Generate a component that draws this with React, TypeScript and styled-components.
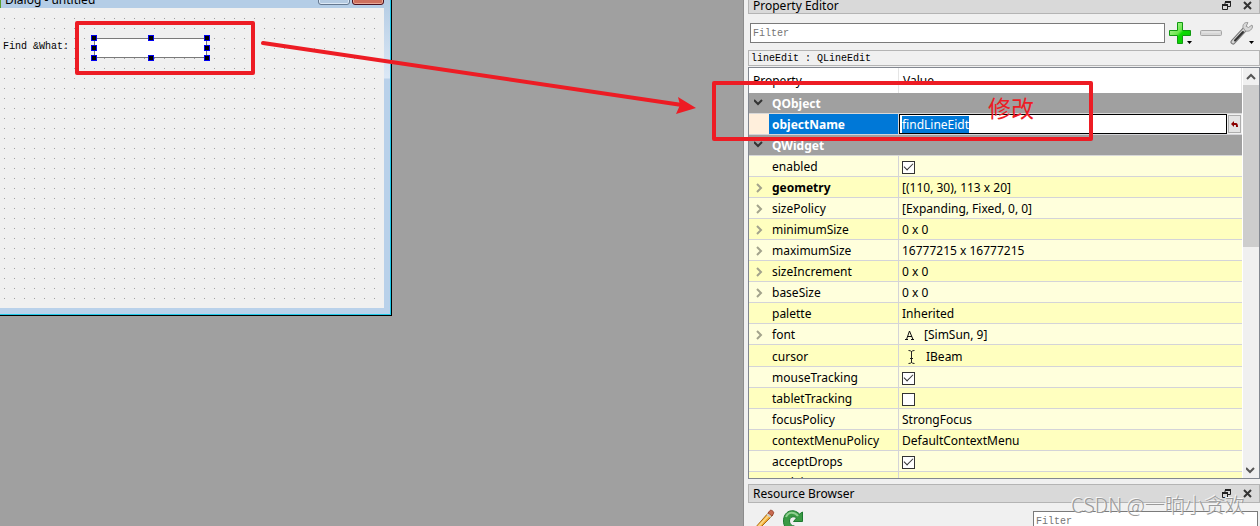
import React, { useEffect, useRef } from 'react';
import styled, { createGlobalStyle } from 'styled-components';

const ui = `"Noto Sans", "Noto Sans CJK SC", sans-serif`;
const mono = `"Liberation Mono", monospace`;
const red = '#ed1c24';

const GlobalStyle = createGlobalStyle`
  *, *::before, *::after { box-sizing: border-box; }
  body { margin: 0; background: #a0a0a0; font: 12px/16px ${ui}; color: #000; overflow: hidden; }
  button, input { font: inherit; color: inherit; margin: 0; padding: 0; }
  button { border: 0; background: none; display: block; }
  svg { display: block; }
`;

const Root = styled.main`
  display: flex;
  height: 100vh;
  position: relative;
`;

const Workspace = styled.section`
  flex: 1;
  min-width: 0;
  display: flex;
  align-items: flex-start;
  background: #a0a0a0;
`;

/* Dialog being designed */

const DialogWindow = styled.div`
  flex: 0 0 392px;
  height: 316px;
  display: flex;
  flex-direction: column;
  border: solid #000;
  border-width: 0 1px 1px 0;
`;

const DialogFrame = styled.div`
  flex: 1;
  display: flex;
  flex-direction: column;
  padding: 0 6px 6px 0;
  border: solid #1fc8e8;
  border-width: 0 1px 1px 0;
  background: linear-gradient(#b4cce4 0, #dbe8f6 78px, #b9d1ea 79px);
`;

const DialogTitleBar = styled.header`
  height: 8px;
  display: flex;
  align-items: flex-end;
  overflow: hidden;
  background: #b4cde6;
  border-left: 1px solid #5aa02c;
`;

const DialogTitle = styled.h1`
  flex: 1;
  margin: 0;
  padding-left: 4px;
  font-size: 12px;
  line-height: 16px;
  font-weight: 400;
`;

const CaptionButtons = styled.div`
  display: flex;
  gap: 2px;
  padding-bottom: 3px;
`;

const CaptionButton = styled.button<{ $close?: boolean }>`
  width: 32px;
  height: 14px;
  border: 1px solid ${p => (p.$close ? '#4a1020' : '#66788f')};
  border-radius: 0 0 3px 3px;
  background: ${p => (p.$close ? '#ce6f5c' : '#b5cbe2')};
  box-shadow: inset 0 0 0 1px ${p => (p.$close ? '#e8a898' : '#dce9f6')};
`;

const FormCanvas = styled.div`
  flex: 1;
  position: relative;
  background-color: #f0f0f0;
  background-image: linear-gradient(90deg, transparent 1px, #f0f0f0 1px),
    linear-gradient(#a0a0a0 1px, transparent 1px);
  background-size: 10px 10px;
  background-position: 4px 0;
  box-shadow: inset 0 1px #f0f0f0;
`;

const FormLabel = styled.label`
  position: absolute;
  left: 3px;
  top: 32px;
  font: 10px/14px ${mono};
`;

const SelectedWidget = styled.div`
  position: absolute;
  left: 94px;
  top: 30px;
  width: 113px;
  height: 20px;
`;

const FormLineEdit = styled.input`
  display: block;
  width: 100%;
  height: 100%;
  border: 1px solid #7a7a7a;
  background: #fff;
  outline: 0;
`;

const Handle = styled.i<{ $x: number; $y: number }>`
  position: absolute;
  left: ${p => p.$x}%;
  top: ${p => p.$y}%;
  width: 6px;
  height: 6px;
  margin: -3px;
  background: #000;
  border: 1px solid #0000f0;
`;

/* Docks */

const Dock = styled.aside`
  flex: 0 0 517px;
  position: relative;
  display: flex;
  flex-direction: column;
  padding-left: 4px;
  border-left: 1px solid #8c8c8c;
  background: #f0f0f0;
`;

const DockTitle = styled.header<{ $clipped?: boolean }>`
  flex: none;
  height: ${p => (p.$clipped ? 14 : 19)}px;
  display: flex;
  align-items: center;
  gap: 12px;
  padding: ${p => (p.$clipped ? '0 7px 2px 4px' : '0 7px 0 4px')};
  background: #d9d9d9;
  border: 1px solid #b4b4b4;
  border-top-width: ${p => (p.$clipped ? 0 : 1)}px;
`;

const DockHeading = styled.h2`
  flex: 1;
  margin: 0;
  font-size: 12px;
  line-height: 14px;
  font-weight: 400;
`;

const Toolbar = styled.div`
  flex: none;
  display: flex;
  align-items: center;
  padding: 7px 2px 5px 2px;
`;

const FilterInput = styled.input`
  flex: 1;
  min-width: 0;
  height: 20px;
  margin-right: 3px;
  padding: 0 2px;
  border: 1px solid #7a7a7a;
  background: #fff;
  font: 10px/16px ${mono};
  outline: 0;
  &::placeholder { color: #757575; opacity: 1; }
`;

const ToolButton = styled.button`
  width: 30px;
  height: 24px;
`;

const ObjectInfo = styled.div`
  flex: none;
  height: 16px;
  padding: 1px 0 0 2px;
  border: 1px solid #b4b4b4;
  font: 10px/14px ${mono};
`;

const TreeView = styled.div`
  flex: 1;
  min-height: 0;
  display: flex;
  margin-top: 1px;
  border: 1px solid #828790;
  background: #fff;
`;

const TreeClip = styled.div`
  flex: 1;
  min-width: 0;
  overflow: hidden;
`;

const Table = styled.table`
  width: 100%;
  table-layout: fixed;
  border-collapse: separate;
  border-spacing: 0;
`;

const HeadCell = styled.th<{ $name?: boolean }>`
  width: ${p => (p.$name ? '150px' : 'auto')};
  height: 25px;
  padding: 0 0 0 4px;
  border-right: 1px solid #e5e5e5;
  text-align: left;
  font-weight: 400;
`;

const GroupCell = styled.th`
  height: 21px;
  padding: 0;
  background: #a0a0a0;
  border-bottom: 1px solid #d8d8d8;
  color: #fff;
  text-align: left;
`;

const Row = styled.tr<{ $dark?: boolean; $tall?: boolean }>`
  height: ${p => (p.$tall ? 22 : 21)}px;
  background: ${p => (p.$dark ? '#ffffbf' : '#ffffdc')};
`;

const NameCell = styled.th<{ $bold?: boolean }>`
  padding: 0;
  border: solid #d4d4d8;
  border-width: 0 1px 1px 0;
  text-align: left;
  font-weight: ${p => (p.$bold ? 700 : 400)};
`;

const ValueCell = styled.td`
  padding: 2px 0 0 3px;
  border-bottom: 1px solid #d4d4d8;
  white-space: nowrap;
`;

const EditorCell = styled.td`
  padding: 0;
  border-bottom: 1px solid #d4d4d8;
  background: #f0f0f0;
`;

const NameLine = styled.div`
  display: flex;
  align-items: center;
  padding-top: 2px;
`;

const Branch = styled.span<{ $raised?: boolean }>`
  flex: 0 0 23px;
  padding: 0 0 ${p => (p.$raised ? 4 : 0)}px 5px;
`;

const ActiveName = styled.div`
  margin-left: 20px;
  padding: 2px 0 0 3px;
  background: #0078d7;
  color: #fff;
  line-height: 18px;
`;

const ActiveRow = styled.tr`
  height: 21px;
  background: #ffefdc;
`;

const EditorLine = styled.div`
  display: flex;
  align-items: center;
  gap: 1px;
  padding-right: 1px;
`;

const ValueEditor = styled.input`
  flex: 1;
  min-width: 0;
  height: 20px;
  padding: 1px 2px 0;
  border: 1px solid #000;
  background: #fff;
  outline: 0;
  &::selection { background: #0078d7; color: #fff; }
`;

const ResetButton = styled.button`
  width: 13px;
  height: 18px;
  border: 1px solid #adadad;
  background: #e4e4e4;
`;

const Check = styled.input`
  appearance: none;
  display: grid;
  place-items: center;
  width: 13px;
  height: 13px;
  border: 1px solid #333;
  background: #fff;
  &:checked::after {
    content: '';
    width: 9px;
    height: 5px;
    margin-top: -3px;
    border: solid #333;
    border-width: 0 0 1px 1px;
    transform: rotate(-45deg);
  }
`;

const IconValue = styled.div`
  display: flex;
  align-items: center;
  gap: 8px;
`;

const ScrollBar = styled.div`
  flex: 0 0 16px;
  margin-left: 1px;
  display: flex;
  flex-direction: column;
  background: #f0f0f0;
`;

const ScrollButton = styled.button`
  height: 17px;
  display: grid;
  place-items: center;
`;

const ScrollTrack = styled.div`
  flex: 1;
`;

const ScrollThumb = styled.div`
  height: 43%;
  background: #cdcdcd;
`;

const ResourcePanel = styled.section`
  flex: 0 0 42px;
  margin-top: 5px;
  overflow: hidden;
`;

const ResourceTools = styled.div`
  display: flex;
  align-items: flex-start;
  gap: 6px;
  padding: 6px 2px 0 6px;
`;

const ResourceFilter = styled.div`
  flex: 0 0 225px;
  display: flex;
  margin-left: auto;
  padding-top: 2px;
`;

const ResourceInput = styled(FilterInput)`
  margin: 0;
`;

/* Annotations drawn over the windows */

const Frame = styled.div<{ $dock?: boolean }>`
  position: absolute;
  z-index: 2;
  border: 4px solid ${red};
  border-radius: 2px;
  pointer-events: none;
  ${p =>
    p.$dock
      ? 'right: 167px; top: 81px; width: 381px; height: 60px;'
      : 'left: 75px; top: 21px; width: 180px; height: 54px;'}
`;

const Arrow = styled.svg`
  position: absolute;
  z-index: 2;
  left: 0;
  top: 0;
  pointer-events: none;
`;

const Note = styled.span`
  position: absolute;
  z-index: 2;
  right: 226px;
  top: 95px;
  color: ${red};
  font: 400 23px/24px "Noto Sans CJK SC", sans-serif;
`;

const Watermark = styled.span`
  position: absolute;
  z-index: 3;
  right: 15px;
  bottom: 9px;
  color: #999;
  font: 300 20px/24px "Noto Sans CJK SC", sans-serif;
  text-shadow: -1px -1px #f6f6f6;
`;

const Chevron = ({ dir, color }: { dir: 'right' | 'down' | 'up'; color: string }) => {
  const d = { right: 'M3 1l4 4-4 4', down: 'M0 3l4 4 4-4', up: 'M1 7l4-4 4 4' }[dir];
  return (
    <svg width="10" height="10" viewBox="0 0 10 10" fill="none" stroke={color} strokeWidth="2">
      <path d={d} />
    </svg>
  );
};

const DockButtons = () => (
  <>
    <button aria-label="Float">
      <svg width="9" height="9" viewBox="0 0 9 9" fill="none" stroke="#222">
        <path d="M3 3V1.500h5.500v4H6" />
        <path d="M3 1h6" strokeWidth="2" />
        <path d="M.5 4.500h5v4h-5z" />
        <path d="M0 4h6" strokeWidth="2" />
      </svg>
    </button>
    <button aria-label="Close">
      <svg width="9" height="9" viewBox="0 0 9 9" stroke="#333" strokeWidth="2">
        <path d="M1 1l7 7M8 1L1 8" />
      </svg>
    </button>
  </>
);

const PlusIcon = () => (
  <svg width="30" height="24" viewBox="0 0 30 24">
    <defs>
      <linearGradient id="plus" x1="0" y1="0" x2="1" y2="1">
        <stop offset="0" stopColor="#c8f8b4" />
        <stop offset=".45" stopColor="#6be84c" />
        <stop offset=".55" stopColor="#0bdc00" />
        <stop offset="1" stopColor="#12c00a" />
      </linearGradient>
    </defs>
    <path d="M9.500 1.500h5v8h8v5h-8v8h-5v-8h-8v-5h8z" fill="url(#plus)" stroke="#109a10" strokeLinejoin="round" />
    <path d="M19 20h5l-2.500 3z" />
  </svg>
);

const MinusIcon = () => (
  <svg width="30" height="24" viewBox="0 0 30 24">
    <rect x="2.500" y="9.500" width="21" height="5" rx="1" fill="#d6d6d6" stroke="#a6a6a6" />
    <path d="M4 11h18" stroke="#ececec" />
  </svg>
);

const WrenchIcon = () => (
  <svg width="30" height="24" viewBox="0 0 30 24" fill="none" strokeLinecap="round">
    <path d="M5 21L17 8" stroke="#777" strokeWidth="5" />
    <path d="M5 21L17 8" stroke="#d4d4d4" strokeWidth="3" />
    <path d="M7 19.500L15 11" stroke="#333" strokeWidth="2" />
    <path d="M19.500 1.500c-3-.5-5 2-4.500 5l2.500 3.500c3 .8 6-.5 7-4l-.5-2-3.500 2.500-2-1z" fill="#d8d8d8" stroke="#999" />
    <path d="M21 20h5l-2.500 3z" fill="#000" />
  </svg>
);

const PencilIcon = () => (
  <svg width="22" height="22" viewBox="0 0 22 22">
    <path d="M1 19L15 3l4 3L4 21z" fill="#f0a830" stroke="#a86a18" />
    <path d="M3 19L16 5" stroke="#fbd680" strokeWidth="2" />
    <path d="M14 4l2-2.500c1-1 4.500 1 3.500 3L18 7z" fill="#c86a50" stroke="#99452f" />
    <path d="M13 5l4 3" stroke="#ccc" strokeWidth="2" />
  </svg>
);

const ReloadIcon = () => (
  <svg width="22" height="22" viewBox="0 0 22 22">
    <path
      d="M20.500 3v9.500h-9l3-3.500c-3-2.500-7-1-7 3 0 3 2 5 5 5l-2 4C4 21 1.500 17 1.500 12 1.500 2 11-1.500 17.500 5z"
      fill="#3a9a44"
      stroke="#1d7a30"
    />
    <path d="M4 8c2-5 8-6 12-1" fill="none" stroke="#90cf90" strokeWidth="2" />
  </svg>
);

const ResetIcon = () => (
  <svg width="11" height="12" viewBox="0 0 11 12" fill="none" stroke="#8b0000" strokeWidth="2">
    <path d="M3 6h4q1 0 1 3" />
    <path d="M5 3v6L2 6z" fill="#8b0000" stroke="none" />
  </svg>
);

const FontIcon = () => (
  <svg width="14" height="14" viewBox="0 0 14 14" fill="none" stroke="#111">
    <path d="M4.500 11.500L7.500 3l3.500 8.500M5.500 8.500h4.500M3 11.500h3M9 11.500h3" />
  </svg>
);

const IBeamIcon = () => (
  <svg width="16" height="16" viewBox="0 0 16 16" fill="none" stroke="#222">
    <path d="M6.500 1.500q2 0 3 1 1-1 3-1M9.500 2v12M6.500 14.500q2 0 3-1 1 1 3 1M8 9.500h3" />
  </svg>
);

type Property = {
  name: string;
  text?: string;
  checked?: boolean;
  expandable?: boolean;
  bold?: boolean;
  icon?: React.ReactNode;
};

const properties: Property[] = [
  { name: 'enabled', checked: true },
  { name: 'geometry', text: '[(110, 30), 113 x 20]', expandable: true, bold: true },
  { name: 'sizePolicy', text: '[Expanding, Fixed, 0, 0]', expandable: true },
  { name: 'minimumSize', text: '0 x 0', expandable: true },
  { name: 'maximumSize', text: '16777215 x 16777215', expandable: true },
  { name: 'sizeIncrement', text: '0 x 0', expandable: true },
  { name: 'baseSize', text: '0 x 0', expandable: true },
  { name: 'palette', text: 'Inherited' },
  { name: 'font', text: '[SimSun, 9]', expandable: true, icon: <FontIcon /> },
  { name: 'cursor', text: 'IBeam', icon: <IBeamIcon /> },
  { name: 'mouseTracking', checked: true },
  { name: 'tabletTracking', checked: false },
  { name: 'focusPolicy', text: 'StrongFocus' },
  { name: 'contextMenuPolicy', text: 'DefaultContextMenu' },
  { name: 'acceptDrops', checked: true },
  { name: 'toolTip', text: '' },
];

const handles = [
  [0, 0], [50, 0], [100, 0],
  [0, 50], [100, 50],
  [0, 100], [50, 100], [100, 100],
];

const Group = ({ name }: { name: string }) => (
  <tr>
    <GroupCell colSpan={2} scope="colgroup">
      <NameLine>
        <Branch $raised><Chevron dir="down" color="#333" /></Branch>
        {name}
      </NameLine>
    </GroupCell>
  </tr>
);

const PropertyRow = ({ item, dark }: { item: Property; dark: boolean }) => (
  <Row $dark={dark} $tall={item.name === 'cursor'}>
    <NameCell scope="row" $bold={item.bold}>
      <NameLine>
        <Branch>{item.expandable && <Chevron dir="right" color="#a3a38c" />}</Branch>
        {item.checked === undefined ? item.name : <label htmlFor={item.name}>{item.name}</label>}
      </NameLine>
    </NameCell>
    <ValueCell>
      {item.checked !== undefined ? (
        <Check type="checkbox" id={item.name} defaultChecked={item.checked} />
      ) : item.icon ? (
        <IconValue>{item.icon}{item.text}</IconValue>
      ) : (
        item.text
      )}
    </ValueCell>
  </Row>
);

export default function App() {
  const editor = useRef<HTMLInputElement>(null);

  useEffect(() => {
    editor.current?.focus();
    editor.current?.select();
  }, []);

  return (
    <Root>
      <GlobalStyle />
      <Workspace>
        <DialogWindow>
          <DialogFrame>
            <DialogTitleBar>
              <DialogTitle>Dialog - untitled</DialogTitle>
              <CaptionButtons>
                <CaptionButton aria-label="Minimize" />
                <CaptionButton aria-label="Close" $close />
              </CaptionButtons>
            </DialogTitleBar>
            <FormCanvas>
              <FormLabel htmlFor="lineEdit">Find &amp;What:</FormLabel>
              <SelectedWidget>
                <FormLineEdit id="lineEdit" />
                {handles.map(([x, y]) => <Handle key={`${x}-${y}`} $x={x} $y={y} />)}
              </SelectedWidget>
            </FormCanvas>
          </DialogFrame>
        </DialogWindow>
      </Workspace>

      <Dock>
        <DockTitle $clipped>
          <DockHeading>Property Editor</DockHeading>
          <DockButtons />
        </DockTitle>
        <Toolbar>
          <FilterInput placeholder="Filter" aria-label="Filter properties" />
          <ToolButton aria-label="Add property"><PlusIcon /></ToolButton>
          <ToolButton aria-label="Remove property"><MinusIcon /></ToolButton>
          <ToolButton aria-label="Configure"><WrenchIcon /></ToolButton>
        </Toolbar>
        <ObjectInfo>lineEdit : QLineEdit</ObjectInfo>
        <TreeView>
          <TreeClip>
            <Table>
              <thead>
                <tr>
                  <HeadCell $name scope="col">Property</HeadCell>
                  <HeadCell scope="col">Value</HeadCell>
                </tr>
              </thead>
              <tbody>
                <Group name="QObject" />
                <ActiveRow>
                  <NameCell scope="row" $bold>
                    <ActiveName><label htmlFor="objectName">objectName</label></ActiveName>
                  </NameCell>
                  <EditorCell>
                    <EditorLine>
                      <ValueEditor id="objectName" ref={editor} defaultValue="findLineEidt" />
                      <ResetButton aria-label="Reset"><ResetIcon /></ResetButton>
                    </EditorLine>
                  </EditorCell>
                </ActiveRow>
                <Group name="QWidget" />
                {properties.map((item, i) => (
                  <PropertyRow key={item.name} item={item} dark={i % 2 === 1} />
                ))}
              </tbody>
            </Table>
          </TreeClip>
          <ScrollBar>
            <ScrollButton aria-label="Scroll up"><Chevron dir="up" color="#555" /></ScrollButton>
            <ScrollTrack><ScrollThumb /></ScrollTrack>
            <ScrollButton aria-label="Scroll down"><Chevron dir="down" color="#555" /></ScrollButton>
          </ScrollBar>
        </TreeView>
        <ResourcePanel>
          <DockTitle>
            <DockHeading>Resource Browser</DockHeading>
            <DockButtons />
          </DockTitle>
          <ResourceTools>
            <button aria-label="Edit resources"><PencilIcon /></button>
            <button aria-label="Reload"><ReloadIcon /></button>
            <ResourceFilter>
              <ResourceInput placeholder="Filter" aria-label="Filter resources" />
            </ResourceFilter>
          </ResourceTools>
        </ResourcePanel>
      </Dock>

      <Frame />
      <Arrow width="700" height="120" viewBox="0 0 700 120">
        <path d="M263 43L682 105" stroke={red} strokeWidth="4" strokeLinecap="round" />
        <path d="M696 108L678 97l2 8-4 9z" fill={red} />
      </Arrow>
      <Frame $dock />
      <Note>修改</Note>
      <Watermark>CSDN @一晌小贪欢</Watermark>
    </Root>
  );
}
